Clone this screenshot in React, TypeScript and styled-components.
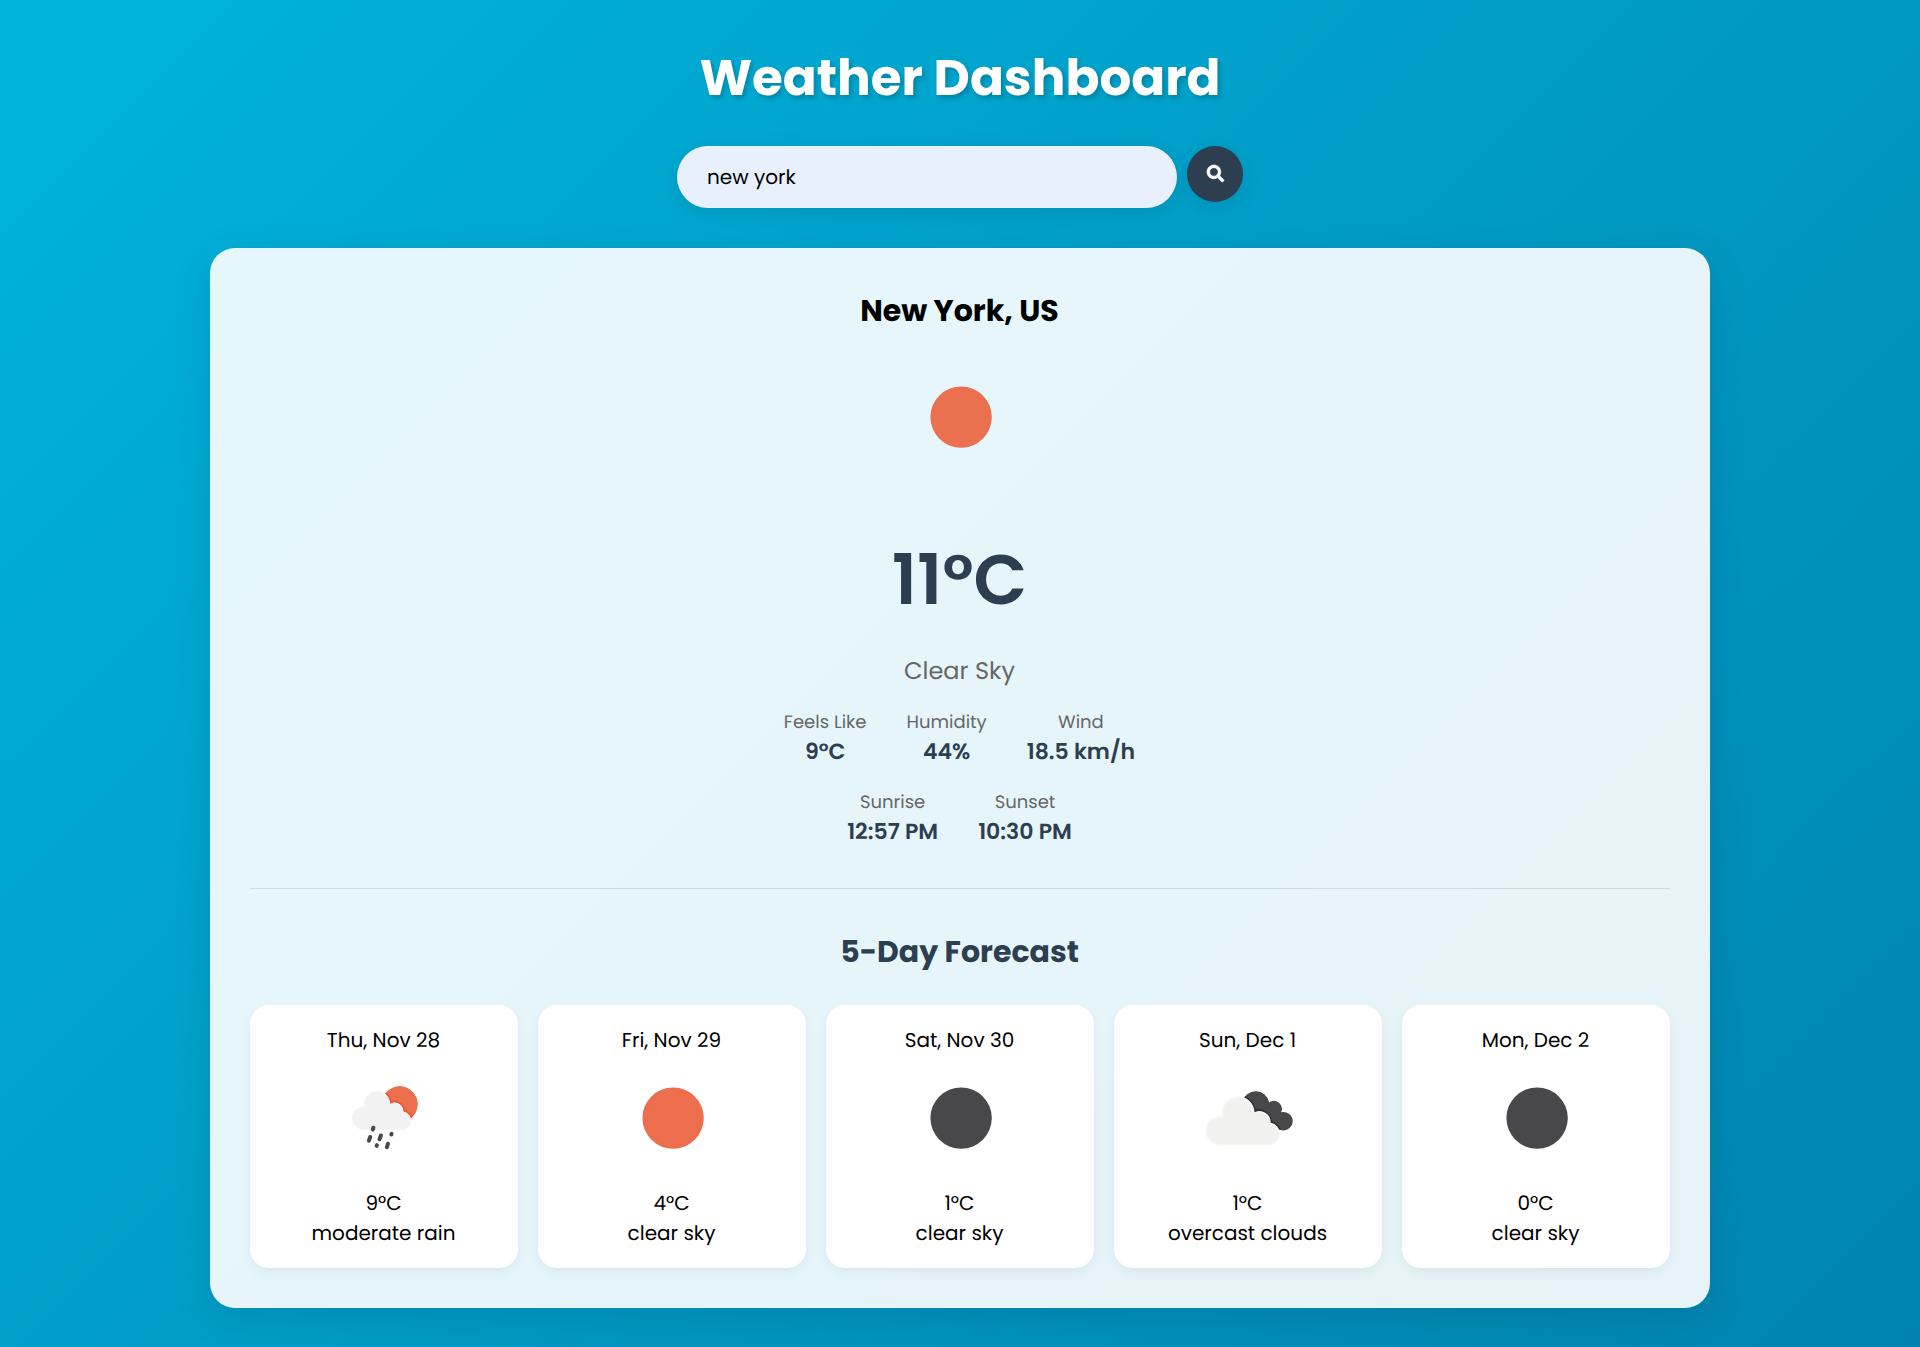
import React from "react";
import styled, { createGlobalStyle } from "styled-components";
import { FaSearch } from "react-icons/fa";

const GlobalStyle = createGlobalStyle`
  *, *::before, *::after { box-sizing: border-box; margin: 0; padding: 0; }
  body {
    font-family: "Poppins", Inter, "Open Sans", sans-serif;
    font-size: 20px;
    line-height: 1.5;
    color: #000;
    text-rendering: geometricPrecision;
  }
`;

const Page = styled.main`
  min-height: 1347px;
  padding: 40px;
  background: linear-gradient(135deg, #00b4db, #0083b0);
`;

const Container = styled.div`
  width: 1500px;
  max-width: 100%;
  margin: 0 auto;
`;

const Title = styled.h1`
  margin-bottom: 31px;
  font-size: 50px;
  font-weight: 700;
  text-align: center;
  color: #fff;
  text-shadow: 2.5px 2.5px 5px rgba(0, 0, 0, 0.2);
`;

const SearchForm = styled.form`
  display: flex;
  justify-content: center;
  align-items: flex-start;
  gap: 10px;
  margin-bottom: 40px;
`;

const SearchInput = styled.input`
  width: 500px;
  height: 62px;
  padding: 0 30px;
  border: none;
  border-radius: 31px;
  background: #e8f0fe;
  font: inherit;
  color: #000;
  outline: none;
  text-rendering: inherit;
  box-shadow: 0 5px 19px rgba(0, 0, 0, 0.1);
`;

const SearchButton = styled.button`
  display: flex;
  align-items: center;
  justify-content: center;
  width: 56px;
  height: 56px;
  padding-bottom: 1px;
  border: none;
  border-radius: 50%;
  background: #2c3e50;
  color: #fff;
  font-size: 17px;
  box-shadow: 0 5px 19px rgba(0, 0, 0, 0.1);

  svg {
    overflow: visible;
    stroke: currentColor;
    stroke-width: 20px;
  }
`;

const Panel = styled.section`
  padding: 40px;
  border-radius: 25px;
  background: rgba(255, 255, 255, 0.9);
  box-shadow: 0 10px 40px rgba(0, 0, 0, 0.1);
`;

const Current = styled.div`
  display: flex;
  flex-direction: column;
  align-items: center;
  padding: 0 1px 40px 0;
  border-bottom: 1px solid rgba(0, 0, 0, 0.1);
`;

const City = styled.h2`
  font-size: 30px;
  font-weight: 700;
`;

const CurrentIcon = styled.div`
  display: flex;
  height: 194px;
  padding: 21px 0 0 1px;
  opacity: 0.98;
`;

const Temperature = styled.div`
  font-size: 70px;
  font-weight: 600;
  color: #2c3e50;
`;

const Condition = styled.div`
  margin: 22px 0 18px;
  font-size: 24px;
  color: #666;
`;

const Details = styled.div`
  display: flex;
  flex-wrap: wrap;
  justify-content: center;
  gap: 20px 40px;
  width: 400px;
`;

const Detail = styled.div`
  padding-bottom: 2px;
  text-align: center;
`;

const DetailLabel = styled.div`
  font-size: 18px;
  line-height: 29px;
  color: #666;
`;

const DetailValue = styled.div`
  font-size: 22px;
  font-weight: 600;
  line-height: 29px;
  color: #2c3e50;
`;

const ForecastTitle = styled.h3`
  margin: 40px 0 31px;
  padding-right: 1px;
  font-size: 30px;
  font-weight: 700;
  text-align: center;
  color: #2c3e50;
`;

const ForecastGrid = styled.div`
  display: grid;
  grid-template-columns: repeat(5, 1fr);
  gap: 20px;
`;

const Card = styled.article`
  padding: 20px 21px 20px 20px;
  border-radius: 19px;
  background: #fff;
  text-align: center;
  box-shadow: 0 5px 12px rgba(0, 0, 0, 0.05);
`;

const CardIcon = styled.div`
  display: flex;
  justify-content: center;
  height: 133px;
  padding-left: 1px;
`;

const IconSvg = styled.svg`
  display: block;
  width: 125px;
  height: 125px;
`;

type Weather = "sun" | "moon" | "rain" | "overcast";

function Disc({ color }: { color: string }) {
  return <circle cx="63.1" cy="63.1" r="30.7" fill={color} />;
}

function RainCloud() {
  return (
    <>
      <defs>
        <clipPath id="rain-sun"><circle cx="77.5" cy="49.3" r="18.2" /></clipPath>
        <path
          id="rain-cloud"
          d="M42.2 74.5A11.4 11.4 0 1 1 42.6 51.8A12.6 12.6 0 1 1 67.4 49.6A8.3 8.3 0 0 1 80.7 56.8A9 9 0 0 1 81.6 74.5Z"
        />
      </defs>
      <g transform="translate(0.2 0)">
        <g clipPath="url(#rain-sun)">
          <circle cx="77.5" cy="49.3" r="18.2" fill="#ec6e4c" />
          <use href="#rain-cloud" fill="none" stroke="#f0512f" strokeWidth="4" />
        </g>
        <use href="#rain-cloud" fill="#f2f2f2" stroke="#f6f8f8" strokeWidth="1" />
        <g stroke="#48484a" strokeWidth="4" strokeLinecap="round">
          <path d="M51.2 72.7l-.6 1.8M48 82l-1.3 3.6M58.7 80.5l-1.4 3.8M69.4 78.8l-.3.7M54.7 90.2l-.3.6M65.8 88.9l-1.2 3.3" />
        </g>
      </g>
    </>
  );
}

function OvercastClouds() {
  return (
    <>
      <defs>
        <clipPath id="dark-cloud">
          <path d="M56.2 47A13.8 13.8 0 0 1 83.2 47.6A7.9 7.9 0 0 1 95.1 57.3A9.2 9.2 0 1 1 96.4 75.3L84 73L62 66Z" />
        </clipPath>
        <path
          id="light-cloud"
          d="M34.5 89.7A14.1 14.1 0 1 1 36.3 61.8A15.8 15.8 0 1 1 67.3 58.2A10.5 10.5 0 0 1 83.4 68A11 11 0 0 1 83.8 89.7Z"
        />
      </defs>
      <g clipPath="url(#dark-cloud)">
        <rect width="125" height="125" fill="#48484a" />
        <use href="#light-cloud" fill="none" stroke="#303032" strokeWidth="5" />
      </g>
      <g transform="translate(0.5 0.2)">
        <use href="#light-cloud" fill="#f1f1f0" stroke="#f8f8f8" strokeWidth="1.4" />
      </g>
    </>
  );
}

function WeatherIcon({ kind }: { kind: Weather }) {
  return (
    <IconSvg viewBox="0 0 125 125" aria-hidden="true">
      {kind === "sun" && <Disc color="#ec6e4c" />}
      {kind === "moon" && <Disc color="#48484a" />}
      {kind === "rain" && <RainCloud />}
      {kind === "overcast" && <OvercastClouds />}
    </IconSvg>
  );
}

const details = [
  { label: "Feels Like", value: "9°C" },
  { label: "Humidity", value: "44%" },
  { label: "Wind", value: "18.5 km/h" },
  { label: "Sunrise", value: "12:57 PM" },
  { label: "Sunset", value: "10:30 PM" },
];

const forecast: { date: string; kind: Weather; temp: string; text: string }[] = [
  { date: "Thu, Nov 28", kind: "rain", temp: "9°C", text: "moderate rain" },
  { date: "Fri, Nov 29", kind: "sun", temp: "4°C", text: "clear sky" },
  { date: "Sat, Nov 30", kind: "moon", temp: "1°C", text: "clear sky" },
  { date: "Sun, Dec 1", kind: "overcast", temp: "1°C", text: "overcast clouds" },
  { date: "Mon, Dec 2", kind: "moon", temp: "0°C", text: "clear sky" },
];

export default function App() {
  return (
    <>
      <GlobalStyle />
      <Page>
        <Container>
          <Title>Weather Dashboard</Title>
          <SearchForm onSubmit={(e) => e.preventDefault()}>
            <SearchInput defaultValue="new york" aria-label="City" />
            <SearchButton type="submit" aria-label="Search">
              <FaSearch />
            </SearchButton>
          </SearchForm>
          <Panel>
            <Current>
              <City>New York, US</City>
              <CurrentIcon>
                <WeatherIcon kind="sun" />
              </CurrentIcon>
              <Temperature>11°C</Temperature>
              <Condition>Clear Sky</Condition>
              <Details>
                {details.map((d) => (
                  <Detail key={d.label}>
                    <DetailLabel>{d.label}</DetailLabel>
                    <DetailValue>{d.value}</DetailValue>
                  </Detail>
                ))}
              </Details>
            </Current>
            <ForecastTitle>5-Day Forecast</ForecastTitle>
            <ForecastGrid>
              {forecast.map((f) => (
                <Card key={f.date}>
                  <div>{f.date}</div>
                  <CardIcon>
                    <WeatherIcon kind={f.kind} />
                  </CardIcon>
                  <div>{f.temp}</div>
                  <div>{f.text}</div>
                </Card>
              ))}
            </ForecastGrid>
          </Panel>
        </Container>
      </Page>
    </>
  );
}
